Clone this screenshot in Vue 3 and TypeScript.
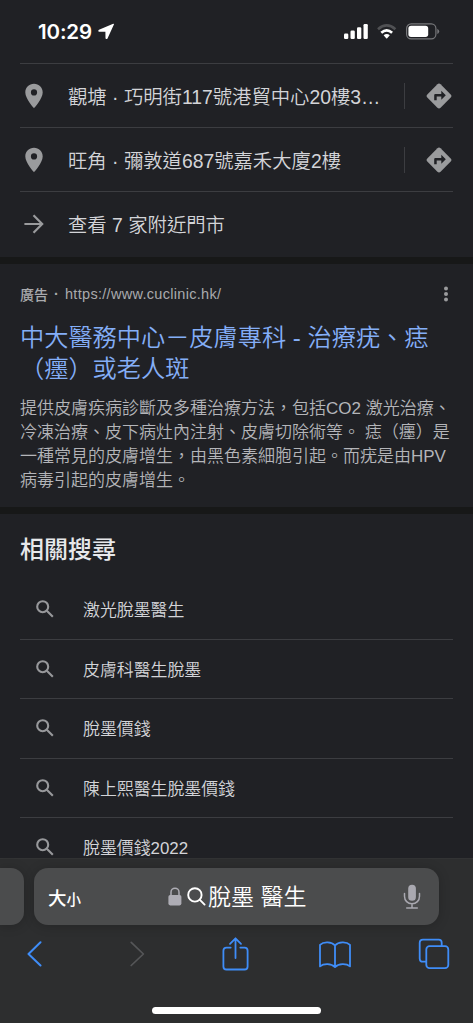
<script setup lang="ts">
interface Shop {
  address: string
}

const shops: Shop[] = [
  { address: '觀塘 · 巧明街117號港貿中心20樓3…' },
  { address: '旺角 · 彌敦道687號嘉禾大廈2樓' },
]

const titleLines: string[] = ['中大醫務中心－皮膚專科 - 治療疣、痣', '（癦）或老人斑']

const summaryLines: string[] = [
  '提供皮膚疾病診斷及多種治療方法，包括CO2 激光治療、',
  '冷凍治療、皮下病灶內注射、皮膚切除術等。 痣（癦）是',
  '一種常見的皮膚增生，由黑色素細胞引起。而疣是由HPV',
  '病毒引起的皮膚增生。',
]

const related: string[] = ['激光脫墨醫生', '皮膚科醫生脫墨', '脫墨價錢', '陳上熙醫生脫墨價錢', '脫墨價錢2022']
</script>

<template>
  <div class="phone">
    <header class="status">
      <span class="clock">10:29</span>
      <svg class="locate" width="17" height="17" viewBox="0 0 17 17">
        <path d="M15.2 .7 1 6.700c-1.100.5-.8 2 .4 2l6 .1.1 6.200c0 1.200 1.500 1.500 2 .4L15.900 1.600c.3-.6-.1-1.100-.7-.9z" fill="#fff" />
      </svg>
      <svg class="signals" width="97" height="18" viewBox="0 0 97 18">
        <g fill="#fff">
          <rect x="0" y="10.500" width="4.300" height="5.500" rx="1.200" />
          <rect x="6.500" y="7.500" width="4.300" height="8.500" rx="1.200" />
          <rect x="13" y="4.200" width="4.300" height="11.800" rx="1.200" />
          <rect x="19.500" y="1" width="4.300" height="15" rx="1.200" />
        </g>
        <g fill="none" stroke-width="2.700">
          <path d="M34 6.200Q42.700-1.300 51.400 6.200" stroke="#505154" />
          <path d="M37.300 9.700Q42.700 4.900 48.100 9.700" stroke="#fff" />
        </g>
        <path d="M39.600 12.200Q42.700 9.700 45.800 12.200L43.200 15.300Q42.700 15.900 42.200 15.300Z" fill="#fff" />
        <rect x="62.600" y=".9" width="29.300" height="14.900" rx="4.600" fill="none" stroke="#77787b" stroke-width="1.200" />
        <rect x="64.400" y="2.700" width="19.800" height="11.300" rx="2.700" fill="#fff" />
        <path d="M93.300 5.800q1.900 1 1.900 2.600t-1.900 2.600z" fill="#77787b" />
      </svg>
    </header>

    <section class="shops">
      <div v-for="shop in shops" :key="shop.address" class="shop">
        <svg class="pin" width="18" height="26" viewBox="0 0 18 26">
          <path fill-rule="evenodd" d="M9 .8C4.100.8.300 4.600.300 9.400.300 15.500 9 25.200 9 25.200s8.700-9.700 8.700-15.800C17.700 4.600 13.900.8 9 .8zm0 11.700a3.100 3.100 0 1 1 0-6.200 3.100 3.100 0 0 1 0 6.200z" fill="#9a9b9d" />
        </svg>
        <span class="shop-text">{{ shop.address }}</span>
        <span class="rule"></span>
        <svg class="turn" width="26" height="26" viewBox="0 0 26 26">
          <path d="M11.400 1.300q1.600-1.500 3.200 0l10.100 10.100q1.500 1.600 0 3.200L14.600 24.700q-1.600 1.500-3.200 0L1.300 14.600q-1.500-1.600 0-3.200z" fill="#9a9b9d" />
          <path d="M8.200 17.200v-5.100q0-1.200 1.200-1.200h5.900V7.700l4.500 4.500-4.500 4.500v-3.300h-4.600v3.800z" fill="#202125" />
        </svg>
      </div>
      <div class="shop">
        <svg class="arrow" width="20" height="20" viewBox="0 0 20 20">
          <path d="M.4 10H18M9.500 1.200 18.200 10 9.500 18.800" fill="none" stroke="#9a9b9d" stroke-width="2.200" />
        </svg>
        <span class="shop-text">查看 7 家附近門市</span>
      </div>
    </section>

    <section class="ad">
      <div class="ad-source">
        <b>廣告</b><i>·</i><span class="url">https://www.cuclinic.hk/</span>
        <svg class="dots" width="4" height="16" viewBox="0 0 4 16">
          <g fill="#9a9b9d"><circle cx="2" cy="2.500" r="2" /><circle cx="2" cy="8" r="2" /><circle cx="2" cy="13.500" r="2" /></g>
        </svg>
      </div>
      <h2><span v-for="line in titleLines" :key="line">{{ line }}</span></h2>
      <p><span v-for="line in summaryLines" :key="line">{{ line }}</span></p>
    </section>

    <section class="related">
      <h3>相關搜尋</h3>
      <div v-for="term in related" :key="term" class="term">
        <svg width="18" height="18" viewBox="0 0 18 18">
          <g fill="none" stroke="#97989b" stroke-width="2.100"><circle cx="6.700" cy="6.700" r="5.500" /><path d="m10.800 10.800 6 6" /></g>
        </svg>
        <span>{{ term }}</span>
      </div>
    </section>

    <footer class="browser">
      <div class="tabs">
        <div class="tab-edge"></div>
        <div class="address">
          <span class="size">大<small>小</small></span>
          <svg class="lock" width="14" height="19" viewBox="0 0 14 19">
            <path d="M3 9V5.200a4 4 0 0 1 8 0V9" fill="none" stroke="#aeadb5" stroke-width="1.500" />
            <rect x=".4" y="8" width="13" height="10.400" rx="1.800" fill="#aeadb5" />
          </svg>
          <svg class="glass" width="19" height="19" viewBox="0 0 19 19">
            <g fill="none" stroke="#fff" stroke-width="1.900" stroke-linecap="round"><circle cx="7.900" cy="7.900" r="6.700" /><path d="m12.900 12.900 4.700 4.700" /></g>
          </svg>
          <span class="query">脫墨 醫生</span>
          <svg class="mic" width="18" height="26" viewBox="0 0 18 26">
            <rect x="5.200" y=".8" width="7.700" height="16" rx="3.850" fill="#a9a8b0" />
            <path d="M1.500 9.600v2.700c0 4.400 3.200 7.400 7.500 7.400s7.500-3 7.500-7.400V9.600M9 19.700v4.200M3.700 24.100h10.600" fill="none" stroke="#a9a8b0" stroke-width="1.500" stroke-linecap="round" />
          </svg>
        </div>
      </div>
      <nav class="tools">
        <svg class="back" width="16" height="26" viewBox="0 0 16 26"><path d="M13.500 1.300 1.500 13l12 11.500" fill="none" stroke="#3f8df8" stroke-width="2" stroke-linecap="round" stroke-linejoin="round" /></svg>
        <svg class="forward" width="16" height="26" viewBox="0 0 16 26"><path d="m2.200 1.300 12.200 11.700L2.200 24.500" fill="none" stroke="#555658" stroke-width="1.700" stroke-linecap="round" stroke-linejoin="round" /></svg>
        <svg class="share" width="28" height="34" viewBox="0 0 28 34">
          <path d="M9.700 10.600H5.500q-3.100 0-3.100 3.100v15.700q0 3.100 3.100 3.100h18q3.100 0 3.100-3.100V13.700q0-3.100-3.100-3.100h-4.200M14.500 21V1.600M9 6.800 14.500 1.300 20 6.800" fill="none" stroke="#3f8df8" stroke-width="1.800" stroke-linecap="round" stroke-linejoin="round" />
        </svg>
        <svg class="book" width="34" height="28" viewBox="0 0 34 28">
          <path d="M17 4.500C13.600.7 5.600.4 2 3.900v21.500c3.700-3.100 11.300-3.100 15 .7 3.700-3.800 11.300-3.800 15-.7V3.900C28.400.4 20.400.7 17 4.500zv21.600" fill="none" stroke="#3f8df8" stroke-width="1.800" stroke-linejoin="round" />
        </svg>
        <svg class="pages" width="32" height="32" viewBox="0 0 32 32">
          <g fill="none" stroke="#3f8df8" stroke-width="1.800"><path d="M8.300 23.700H5q-3.300 0-3.300-3.300V5q0-3.300 3.300-3.300h15.700q3 0 3 3v3.500" /><rect x="8.300" y="8.200" width="22" height="22" rx="3.300" /></g>
        </svg>
      </nav>
      <div class="home"></div>
    </footer>
  </div>
</template>

<style>
body {
  margin: 0;
  background: #202125;
}
</style>

<style scoped>
.phone {
  width: 473px;
  height: 1023px;
  overflow: hidden;
  display: flex;
  flex-direction: column;
  box-sizing: border-box;
  background: #202125;
  color: #d3d4d8;
  font-family: "Liberation Sans", "Noto Sans CJK TC", sans-serif;
  font-weight: 350;
  white-space: nowrap;
}
.phone svg {
  flex: none;
  display: block;
}
.status {
  height: 63px;
  flex: none;
  display: flex;
  box-sizing: border-box;
  padding: 23px 32px 0 38px;
}
.clock {
  width: 60px;
  color: #fff;
  font: 600 20.500px/18px Inter, sans-serif;
  letter-spacing: -0.150px;
}
.signals {
  margin-left: auto;
}
.shops {
  flex: none;
  height: 194px;
  padding: 0 20px;
}
.shop {
  height: 64.200px;
  box-sizing: border-box;
  border-top: 1px solid #3c3d41;
  display: flex;
  align-items: center;
}
.pin {
  margin-left: 5px;
  margin-right: 25px;
}
.arrow {
  margin-left: 4px;
  margin-right: 24px;
}
.shop-text {
  padding-top: 2px;
  font-size: 19.350px;
  line-height: 30px;
}
.rule {
  width: 1px;
  height: 26px;
  margin-left: auto;
  margin-right: 21px;
  background: #3c3d41;
}
.turn {
  margin-right: 1px;
}
.ad {
  flex: none;
  height: 257px;
  box-sizing: border-box;
  border-top: 7px solid #171818;
  border-bottom: 7px solid #171818;
  padding: 19px 20px 0;
}
.ad-source {
  height: 22px;
  display: flex;
  align-items: center;
  color: #a9aaad;
  font-size: 14.500px;
}
.ad-source b {
  font-size: 14px;
  font-weight: 500;
}
.ad-source i {
  width: 17px;
  text-align: center;
  font-style: normal;
  font-weight: 700;
}
.url {
  letter-spacing: 0.300px;
}
.dots {
  margin-left: auto;
  margin-right: 5px;
}
h2 {
  margin: 17px 0 0;
  color: #84aef7;
  font-size: 24.200px;
  font-weight: 350;
  line-height: 31px;
}
h2 span,
p span {
  display: block;
}
p {
  margin: 13px 0 0;
  color: #b4b5b9;
  font-size: 17px;
  line-height: 24px;
}
.related {
  flex: none;
  height: 344px;
  overflow: hidden;
  padding: 0 20px;
}
h3 {
  height: 66px;
  margin: 0;
  color: #e7e8eb;
  font-size: 24px;
  font-weight: 500;
  line-height: 71px;
}
.term {
  height: 59.500px;
  box-sizing: border-box;
  display: flex;
  align-items: center;
  gap: 29px;
  padding-left: 16px;
  border-bottom: 1px solid #3c3d41;
  font-size: 16.900px;
}
.term span {
  padding-bottom: 1px;
}
.browser {
  flex: none;
  height: 165px;
  box-sizing: border-box;
  padding-top: 10px;
  background: #2d2e2f;
  box-shadow: inset 0 1px #323334;
}
.tabs {
  display: flex;
  gap: 10px;
}
.tab-edge {
  width: 24px;
  height: 57px;
  border-radius: 0 13px 13px 0;
  background: #4b4c4d;
  box-shadow: 0 1px 12px #0003;
}
.address {
  width: 405px;
  height: 57px;
  box-sizing: border-box;
  padding: 0 18px 0 14px;
  display: flex;
  align-items: center;
  border-radius: 14px;
  background: #4b4c4d;
  box-shadow: 0 1px 12px #0003;
  color: #fff;
}
.size {
  width: 120px;
  font-size: 18.500px;
  font-weight: 500;
}
.size small {
  font-size: 14.500px;
}
.glass {
  margin-left: 5px;
}
.query {
  margin-left: 2px;
  padding-bottom: 4px;
  font-size: 23px;
}
.mic {
  margin-left: auto;
}
.tools {
  height: 81px;
  display: flex;
  align-items: flex-start;
  padding: 9px 22px 0 27px;
  box-sizing: border-box;
}
.back {
  margin-top: 7px;
}
.forward {
  margin-top: 7px;
  margin-left: 86px;
}
.share {
  margin-left: 76px;
  margin-top: 3px;
}
.book {
  margin-left: 69px;
  margin-top: 7px;
}
.pages {
  margin-left: 66px;
  margin-top: 4px;
}
.home {
  width: 169px;
  height: 6.500px;
  margin: 1px auto 0;
  border-radius: 3.500px;
  background: #fff;
}
</style>
